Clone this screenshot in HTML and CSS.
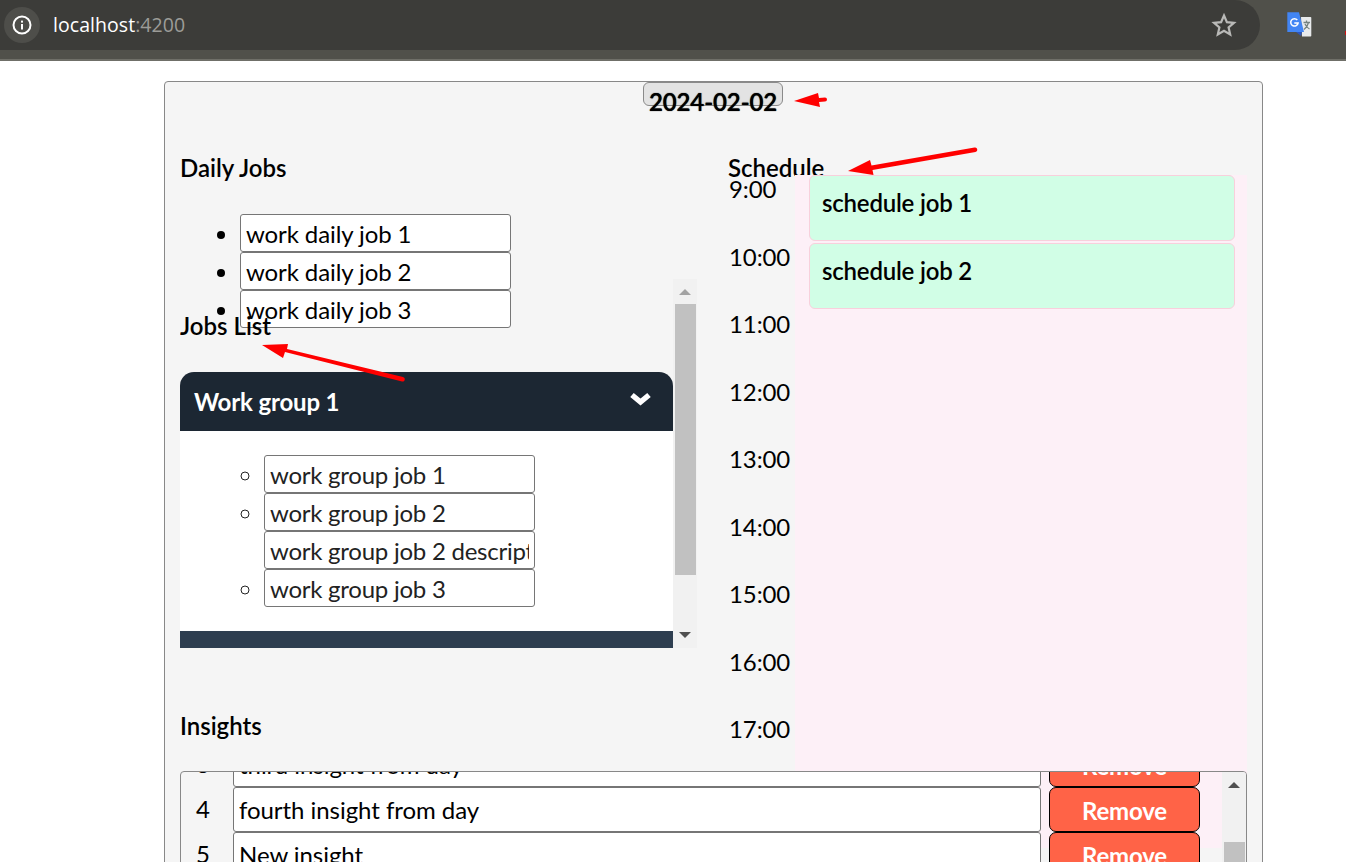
FILE: index.html
```html
<!DOCTYPE html>
<html>
<head>
<title>Daily planner</title>
<meta charset="utf-8">
<link rel="stylesheet" href="styles.css">
</head>

<body>
  <header class="browser-bar">
    <div class="address">
      <span class="site-info">
        <svg width="20" height="20" viewBox="0 0 20 20">
          <circle cx="10" cy="10" r="8.5" fill="none" stroke="#fff" stroke-width="2"/>
          <rect x="9" y="9" width="2" height="5.5" fill="#fff"/>
          <rect x="9" y="5.6" width="2" height="2" fill="#fff"/>
        </svg>
      </span>
      <span class="url">localhost<span class="url-port">:4200</span></span>
      <svg class="star" width="26" height="26" viewBox="0 0 26 26">
        <path d="M13 3.5l2.9 6.6 7.1.7-5.4 4.7 1.6 7-6.2-3.700-6.200 3.700 1.600-7L3 10.800l7.100-.7z" fill="none" stroke="#b9b9b7" stroke-width="2.200" stroke-linejoin="miter"/>
      </svg>
    </div>
    <svg class="translate" width="26" height="27" viewBox="0 0 26 27">
      <path d="M14 6h9.500a.8.800 0 0 1 .8.800v18a.8.800 0 0 1-.8.800H15z" fill="#e8eaec"/>
      <path d="M16.500 11.500h6.500M19.500 9.500v2M21.500 11.500c-.8 3.500-2.400 5.500-4.500 7M18 13c1 2.300 2.500 4 4.500 5" fill="none" stroke="#75827f" stroke-width="1.300"/>
      <path d="M.3 1.300h11.700l5 19.700H.3z" fill="#4285f4"/>
      <path d="M9 21h6l-1 4z" fill="#2f55b8"/>
      <path d="M10.300 9a3.700 3.700 0 1 0 .8 3H7.300" fill="none" stroke="#fff" stroke-width="1.500"/>
    </svg>
    <span class="ext-edge"></span>
  </header>

  <main class="card">
    <div class="date-row">
      <button class="date-btn">2024-02-02</button>
    </div>

    <div class="top-grid">
      <section class="left-col">
        <div class="daily">
          <h2 class="title">Daily Jobs</h2>
          <ul class="job-list">
            <li><div class="field">work daily job 1</div></li>
            <li><div class="field">work daily job 2</div></li>
            <li><div class="field">work daily job 3</div></li>
          </ul>
        </div>

        <div class="jobs-scroll">
          <div class="jobs-content">
            <h2 class="title">Jobs List</h2>
            <div class="group-head">
              <span>Work group 1</span>
              <svg class="chevron" width="21" height="14" viewBox="0 0 21 14">
                <path d="M2 3L10.500 10 19 3" fill="none" stroke="#fff" stroke-width="5.500"/>
              </svg>
            </div>
            <div class="group-body">
              <ul class="group-list">
                <li><div class="field">work group job 1</div></li>
                <li><div class="field">work group job 2</div><div class="field">work group job 2 description</div></li>
                <li><div class="field">work group job 3</div></li>
              </ul>
            </div>
            <div class="group-next"></div>
          </div>
          <div class="scrollbar">
            <span class="arrow-up arrow-off"></span>
            <span class="thumb thumb-jobs"></span>
            <span class="arrow-down"></span>
          </div>
        </div>
      </section>

      <section class="right-col">
        <h2 class="title schedule-title">Schedule</h2>
        <div class="schedule">
          <div class="times">
            <div class="time">9:00</div>
            <div class="time">10:00</div>
            <div class="time">11:00</div>
            <div class="time">12:00</div>
            <div class="time">13:00</div>
            <div class="time">14:00</div>
            <div class="time">15:00</div>
            <div class="time">16:00</div>
            <div class="time">17:00</div>
          </div>
          <div class="slots">
            <div class="slot-job">schedule job 1</div>
            <div class="slot-job">schedule job 2</div>
          </div>
        </div>
      </section>
    </div>

    <section class="insights">
      <h2 class="title">Insights</h2>
      <div class="insight-panel">
        <div class="insight-rows">
          <div class="insight-row">
            <span class="insight-num">3</span>
            <div class="field">third insight from day</div>
            <button class="remove-btn">Remove</button>
          </div>
          <div class="insight-row">
            <span class="insight-num">4</span>
            <div class="field">fourth insight from day</div>
            <button class="remove-btn">Remove</button>
          </div>
          <div class="insight-row">
            <span class="insight-num">5</span>
            <div class="field">New insight</div>
            <button class="remove-btn">Remove</button>
          </div>
        </div>
        <div class="scrollbar">
          <span class="arrow-up"></span>
          <span class="thumb thumb-insights"></span>
        </div>
      </div>
    </section>
  </main>

  <!-- red arrows drawn on the screenshot -->
  <svg class="marks" width="1346" height="862" viewBox="0 0 1346 862">
    <g fill="#f00" stroke="none">
      <path d="M794 101L818 93l1 5 6-.5a2 2 0 0 1 0 4l-6 .5 1 5z"/>
      <path d="M848 171l22-11 1.500 5.500 103-18a2.200 2.200 0 0 1 1 4.500l-103 18 1 5z"/>
      <path d="M262 345l26-1-1 5 116 28a2.200 2.200 0 0 1-1 4.500L285 352l-2 6z"/>
    </g>
  </svg>
</body>

</html>
```

FILE: styles.css
```css
html {
  width: 100%;
  height: 100%;
}
body {
  margin: 0;
  height: 862px;
  overflow: hidden;
  background-color: #fff;
  color: #000;
  font: 400 24px/29px Lato, sans-serif;
  letter-spacing: -0.1px;
}

/* browser chrome */
.browser-bar {
  display: flex;
  align-items: flex-start;
  height: 59px;
  background-color: #50504a;
  border-bottom: 2px solid #6f6f68;
}
.address {
  display: flex;
  align-items: center;
  width: 1260px;
  height: 50px;
  padding-left: 4px;
  box-sizing: border-box;
  background-color: #3c3c39;
  border-radius: 0 25px 25px 0;
}
.site-info {
  display: flex;
  align-items: center;
  justify-content: center;
  width: 36px;
  height: 36px;
  border-radius: 50%;
  background-color: #4e4e4a;
}
.url {
  margin-left: 13px;
  font: 400 19.500px/26px "Open Sans", sans-serif;
  letter-spacing: 0.05px;
  color: #fff;
}
.url-port {
  color: #9c9c98;
}
.star {
  margin-left: auto;
  margin-right: 23px;
}
.translate {
  margin: 11px 0 0 27px;
}
.ext-edge {
  width: 1px;
  height: 4px;
  margin: 31px 0 0 32px;
  background-color: #d01010;
}

/* main card */
.card {
  width: 1099px;
  height: 900px;
  margin: 20px 0 0 164px;
  box-sizing: border-box;
  background-color: #f5f5f5;
  border: 1px solid #888;
  border-radius: 4px;
}
.date-row {
  display: flex;
  justify-content: center;
  padding-right: 1px;
}
.date-btn {
  width: 140px;
  height: 24px;
  padding: 4px 0 0;
  font: 600 24px/29px Lato, sans-serif;
  letter-spacing: -0.1px;
  color: #000;
  text-shadow: 0 0 1px #000;
  background-color: #e3e3e3;
  border: 1px solid #8a8a8a;
  border-radius: 6px;
  white-space: nowrap;
  overflow: visible;
}
.title {
  height: 29px;
  margin: 0;
  font: 600 24px/25px Lato, sans-serif;
  letter-spacing: 0;
}
.field {
  height: 38px;
  padding: 0 5px;
  box-sizing: border-box;
  overflow: clip;
  overflow-clip-margin: content-box;
  white-space: nowrap;
  line-height: 37px;
  background-color: #fff;
  border: 1px solid #767676;
  border-radius: 3px;
}

.top-grid {
  display: grid;
  grid-template-columns: 517px 519px;
  column-gap: 31px;
  height: 557px;
  margin-top: 49px;
  padding: 0 15px;
}

/* left column */
.daily {
  height: 124px;
}
.job-list {
  margin: 30px 0 0;
  padding: 0 0 0 60px;
}
.job-list .field,
.group-list .field {
  width: 271px;
}
.group-list {
  margin: 0;
  padding: 24px 0 24px 84px;
  list-style-type: circle;
  letter-spacing: -0.25px;
}
.jobs-scroll {
  display: flex;
  height: 369px;
}
.jobs-content {
  width: 493px;
  height: 369px;
  overflow: hidden;
  padding-top: 34px;
  box-sizing: border-box;
}
.group-head {
  display: flex;
  align-items: center;
  justify-content: space-between;
  height: 59px;
  margin-top: 30px;
  padding: 0 22px 0 14px;
  font-weight: 700;
  letter-spacing: -0.15px;
  color: #fff;
  background-color: #1c2733;
  border-radius: 14px 14px 0 0;
}
.chevron {
  margin-bottom: 5px;
}
.group-body {
  background-color: #fff;
  color: #222;
}
.group-next {
  height: 40px;
  background-color: #2e3e50;
}

/* fake scrollbars, the page does not really scroll */
.scrollbar {
  display: flex;
  flex-direction: column;
  align-items: center;
  width: 24px;
  background-color: #f1f1f1;
}
.arrow-up,
.arrow-down {
  width: 0;
  height: 0;
  border-left: 6px solid transparent;
  border-right: 6px solid transparent;
}
.arrow-up {
  margin-top: 10px;
  border-bottom: 6px solid #505050;
}
.arrow-off {
  border-bottom-color: #a3a3a3;
}
.arrow-down {
  margin-bottom: 10px;
  border-top: 6px solid #505050;
}
.thumb {
  width: 21px;
  background-color: #c1c1c1;
}
.thumb-jobs {
  height: 271px;
  margin: 9px 0 auto;
}
.thumb-insights {
  height: 60px;
  margin-top: 54px;
}

/* schedule */
.schedule-title {
  height: 20px;
}
.schedule {
  display: flex;
  position: relative;
  height: 673px;
}
.times {
  width: 67px;
  padding-left: 1px;
  box-sizing: border-box;
  flex-shrink: 0;
}
.time {
  height: 67.500px;
  line-height: 27px;
}
.slots {
  flex: 1;
  padding: 0 12px 0 14px;
  background-color: #fdf0f7;
}
.slot-job {
  height: 66px;
  margin-bottom: 2px;
  padding: 12px 12px 0;
  box-sizing: border-box;
  font-weight: 600;
  letter-spacing: -0.2px;
  background-color: #d1fee6;
  border: 1px solid #f8d0dc;
  border-radius: 6px;
}

/* insights */
.insights {
  position: relative;
  padding: 1px 15px 0;
}
.insight-panel {
  display: flex;
  height: 140px;
  margin-top: 29px;
  overflow: hidden;
  border: 1px solid #888;
  border-radius: 4px;
}
.insight-rows {
  flex: 1;
  margin-top: -30px;
}
.insight-row {
  display: grid;
  grid-template-columns: 44px 808px 151px;
  column-gap: 8px;
  height: 45px;
}
.insight-num {
  line-height: 43px;
  text-align: center;
}
.insight-row .field {
  height: 45px;
  line-height: 43px;
  letter-spacing: -0.05px;
}
.remove-btn {
  height: 45px;
  padding: 1px 0 0;
  font: 700 24px/29px Lato, sans-serif;
  letter-spacing: -0.2px;
  color: #fff;
  background-color: #ff6347;
  border: 1px solid #000;
  border-radius: 7px;
}

/* annotations over the screenshot */
.marks {
  position: absolute;
  left: 0;
  top: 0;
  pointer-events: none;
}
```
